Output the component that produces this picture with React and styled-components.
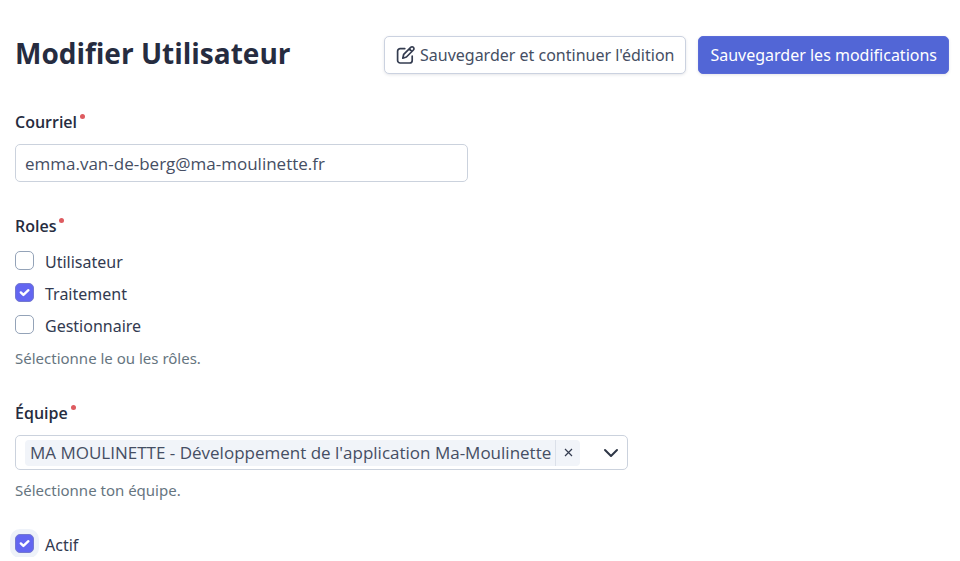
import React, { useState } from "react";
import styled, { createGlobalStyle, css } from "styled-components";

const displayFont = '"Segoe UI", "Open Sans", sans-serif';

const GlobalStyle = createGlobalStyle`
  *, *::before, *::after { box-sizing: border-box; }
  body {
    margin: 0;
    background: #fff;
    color: #323a50;
    font-family: "Segoe UI", "Noto Sans", sans-serif;
    font-size: 16px;
    line-height: 24px;
  }
  button, input, select { font: inherit; color: inherit; }
`;

const Page = styled.main`
  padding: 36px 11px 0 15px;
`;

const Header = styled.header`
  display: flex;
  align-items: center;
  justify-content: space-between;
  gap: 16px;
  margin-bottom: 36px;
`;

const Title = styled.h1`
  margin: 0;
  padding-bottom: 3px;
  font-family: ${displayFont};
  font-size: 28px;
  line-height: 35px;
  font-weight: 700;
  color: #262c40;
  white-space: nowrap;
`;

const Actions = styled.div`
  display: flex;
  gap: 12px;
`;

const Button = styled.button`
  display: flex;
  align-items: center;
  gap: 4px;
  height: 38px;
  padding: 0 11px;
  border: 1px solid ${(p) => (p.$primary ? "#5a6bd8" : "#cbd2e0")};
  border-radius: 5px;
  background: ${(p) => (p.$primary ? "#5266d6" : "#fff")};
  color: ${(p) => (p.$primary ? "#fff" : "#454e63")};
  box-shadow: 0 1px 3px rgba(43, 50, 71, 0.12);
  white-space: nowrap;
  cursor: pointer;
`;

const Form = styled.form`
  display: flex;
  flex-direction: column;
`;

const Field = styled.div`
  display: flex;
  flex-direction: column;
  margin-bottom: 32px;
`;

const RoleGroup = styled.fieldset`
  min-width: 0;
  margin: 0 0 32px;
  padding: 0;
  border: 0;
`;

const labelText = css`
  padding: 0;
  font-family: ${displayFont};
  font-weight: 600;
  color: #262c40;
  &::after {
    content: "";
    display: inline-block;
    width: 5px;
    height: 5px;
    margin-left: 3px;
    border-radius: 50%;
    background: #de5b60;
    vertical-align: 9px;
  }
`;

const Label = styled.label`
  ${labelText}
  margin-bottom: 10px;
`;

const Legend = styled.legend`
  ${labelText}
  margin-bottom: 12px;
`;

const TextInput = styled.input`
  width: 100%;
  max-width: 453px;
  height: 38px;
  padding: 0 9px;
  border: 1px solid #cbd2dd;
  border-radius: 5px;
  background: #fff;
  color: #454e63;
  font-family: ${displayFont};
  font-size: 17px;
`;

const Options = styled.div`
  display: flex;
  flex-direction: column;
  gap: 8px;
`;

const CheckLabel = styled.label`
  display: flex;
  align-items: center;
  gap: 10px;
  cursor: pointer;
`;

const CheckBox = styled.span`
  display: grid;
  flex: none;
  width: 20px;
  height: 19px;
  margin-bottom: 3px;

  > * { grid-area: 1 / 1; }
  svg { margin: 4px; pointer-events: none; }
`;

const CheckInput = styled.input`
  appearance: none;
  width: 19px;
  height: 19px;
  margin: 0;
  border: 1px solid #94a3b8;
  border-radius: 5px;
  background: #fff;
  box-shadow: ${(p) => (p.$halo ? "0 0 0 5px #eef2f9" : "none")};

  &:checked {
    border-color: #7479cf;
    background: #6366f1;
  }
`;

const Help = styled.p`
  margin: 9px 0 0;
  font-size: 15px;
  line-height: 22px;
  color: #66757f;
`;

const TagSelect = styled.div`
  display: flex;
  align-items: center;
  width: 100%;
  max-width: 613px;
  height: 35px;
  padding: 0 8px 0 9px;
  border: 1px solid #cbd2dd;
  border-radius: 5px;
  background: #fff;
`;

const Tag = styled.span`
  display: flex;
  flex: none;
  height: 26px;
  border-radius: 4px;
  background: #f1f4f9;
  color: #454e63;
  font-family: ${displayFont};
  font-size: 17px;
  line-height: 26px;
  white-space: nowrap;
`;

const TagText = styled.span`
  padding: 0 4px 0 5px;
`;

const TagRemove = styled.button`
  display: grid;
  place-items: center;
  width: 25px;
  padding: 0;
  border: 0;
  border-left: 1px solid #dbe0e9;
  background: none;
  cursor: pointer;
`;

const Picker = styled.span`
  display: grid;
  flex: 1;
  align-items: center;

  > * { grid-area: 1 / 1; }
  svg { justify-self: end; pointer-events: none; }
`;

const PickerSelect = styled.select`
  appearance: none;
  width: 100%;
  height: 30px;
  border: 0;
  background: transparent;
  cursor: pointer;
`;

function EditIcon() {
  return (
    <svg width="20" height="20" viewBox="0 0 20 20" fill="none" stroke="#343c50" strokeWidth="1.7" strokeLinecap="round" strokeLinejoin="round" aria-hidden="true">
      <path d="M8.8 3.6H4.2A2.6 2.6 0 0 0 1.6 6.2v9.2a2.6 2.6 0 0 0 2.6 2.6h9.4a2.6 2.6 0 0 0 2.6-2.6v-4.2" />
      <path d="M6.8 13.2l.9-3.9 7-7a1.9 1.9 0 0 1 2.7 2.7l-7 7zM13.2 3.8l2.6 2.6" />
    </svg>
  );
}

function Check({ label, defaultChecked = false, halo = false }) {
  const [checked, setChecked] = useState(defaultChecked);
  return (
    <CheckLabel>
      <CheckBox>
        <CheckInput type="checkbox" $halo={halo} checked={checked} onChange={(e) => setChecked(e.target.checked)} />
        {checked && (
          <svg width="12" height="12" viewBox="0 0 12 12" fill="none" stroke="#fff" strokeWidth="2.4" strokeLinecap="round" strokeLinejoin="round" aria-hidden="true">
            <path d="M1.8 5.4l2.6 2.5 5-4.7" />
          </svg>
        )}
      </CheckBox>
      {label}
    </CheckLabel>
  );
}

const TEAM = "MA MOULINETTE - Développement de l'application Ma-Moulinette";

export default function App() {
  const [team, setTeam] = useState(TEAM);
  return (
    <Page>
      <GlobalStyle />
      <Header>
        <Title>Modifier Utilisateur</Title>
        <Actions>
          <Button type="submit" form="user">
            <EditIcon />
            Sauvegarder et continuer l'édition
          </Button>
          <Button type="submit" form="user" $primary>
            Sauvegarder les modifications
          </Button>
        </Actions>
      </Header>
      <Form id="user" onSubmit={(e) => e.preventDefault()}>
        <Field>
          <Label htmlFor="email">Courriel</Label>
          <TextInput id="email" type="email" defaultValue="emma.van-de-berg@ma-moulinette.fr" />
        </Field>
        <RoleGroup>
          <Legend>Roles</Legend>
          <Options>
            <Check label="Utilisateur" />
            <Check label="Traitement" defaultChecked />
            <Check label="Gestionnaire" />
          </Options>
          <Help>Sélectionne le ou les rôles.</Help>
        </RoleGroup>
        <Field>
          <Label htmlFor="team">Équipe</Label>
          <TagSelect>
            {team && (
              <Tag>
                <TagText>{team}</TagText>
                <TagRemove type="button" aria-label="Retirer l'équipe" onClick={() => setTeam("")}>
                  <svg width="9" height="9" viewBox="0 0 9 9" stroke="#343c50" strokeWidth="1.2" aria-hidden="true">
                    <path d="M1 1l7 7M8 1L1 8" />
                  </svg>
                </TagRemove>
              </Tag>
            )}
            <Picker>
              <PickerSelect id="team" value="" onChange={(e) => setTeam(e.target.value)}>
                <option value="" />
                <option value={TEAM}>{TEAM}</option>
              </PickerSelect>
              <svg width="16" height="16" viewBox="0 0 16 16" fill="none" stroke="#2f3747" strokeWidth="2" strokeLinecap="round" strokeLinejoin="round" aria-hidden="true">
                <path d="M2 5l6 6 6-6" />
              </svg>
            </Picker>
          </TagSelect>
          <Help>Sélectionne ton équipe.</Help>
        </Field>
        <Check label="Actif" defaultChecked halo />
      </Form>
    </Page>
  );
}
